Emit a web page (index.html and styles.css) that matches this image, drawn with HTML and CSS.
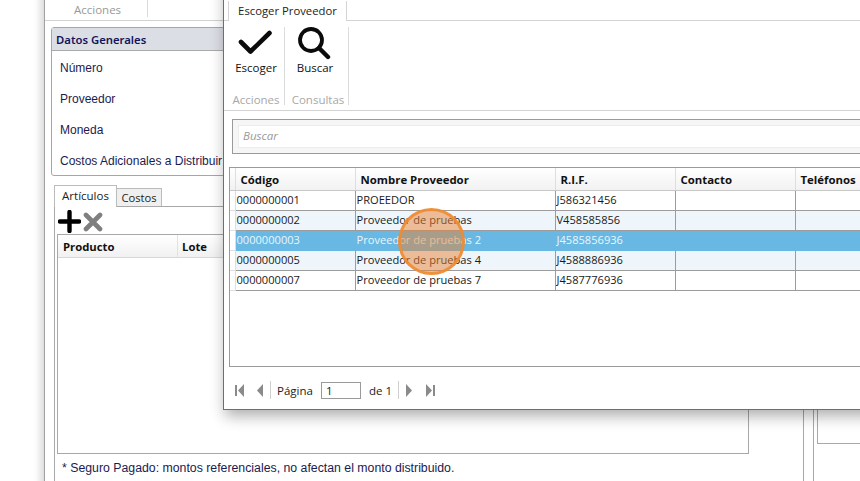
FILE: index.html
```html
<!DOCTYPE html>
<html lang="es">
<head>
<meta charset="utf-8">
<title>Escoger Proveedor</title>
<link rel="stylesheet" href="styles.css">
</head>
<body>
<div class="desktop">
  <section class="window back">
    <div class="back-ribbon"><span class="back-group">Acciones</span></div>
    <div class="panel">
      <div class="panel-head">Datos Generales</div>
      <div class="panel-body">
        <div class="field">Número</div>
        <div class="field">Proveedor</div>
        <div class="field">Moneda</div>
        <div class="field">Costos Adicionales a Distribuir</div>
      </div>
    </div>
    <div class="lower">
      <div class="left-col">
        <div class="tabs">
          <span class="tab active">Artículos</span>
          <span class="tab">Costos</span>
        </div>
        <div class="tab-body">
          <div class="mini-tools">
            <svg class="ic-plus" width="23" height="23" viewBox="0 0 23 23"><path d="M11.500 2v19M2 11.500h19" stroke="#000" stroke-width="4.400" stroke-linecap="round" fill="none"/></svg>
            <svg class="ic-x" width="20" height="20" viewBox="0 0 20 20"><path d="M3 3l14 14M17 3L3 17" stroke="#7f7f7f" stroke-width="4.600" stroke-linecap="round" fill="none"/></svg>
          </div>
          <div class="items">
            <div class="items-head"><span class="col-prod">Producto</span><span class="col-lote">Lote</span></div>
          </div>
          <p class="note">* Seguro Pagado: montos referenciales, no afectan el monto distribuido.</p>
        </div>
      </div>
      <div class="right-col"><div class="right-box"></div></div>
    </div>
  </section>

  <section class="window dialog">
    <div class="dlg-tabs"><span class="dlg-tab">Escoger Proveedor</span></div>
    <div class="dlg-ribbon">
      <div class="group g-acc">
        <div class="tool">
          <svg width="36" height="33" viewBox="0 0 36 33"><path d="M3 15l9.500 9.500L31.500 6" stroke="#0b0b0b" stroke-width="4.600" stroke-linecap="round" stroke-linejoin="round" fill="none"/></svg>
          <span>Escoger</span>
        </div>
        <div class="group-name">Acciones</div>
      </div>
      <div class="group g-con">
        <div class="tool">
          <svg width="36" height="33" viewBox="0 0 36 33"><circle cx="14" cy="13" r="11" stroke="#0b0b0b" stroke-width="3.800" fill="none"/><path d="M22 21l9 9" stroke="#0b0b0b" stroke-width="4.400" stroke-linecap="round" fill="none"/></svg>
          <span>Buscar</span>
        </div>
        <div class="group-name">Consultas</div>
      </div>
    </div>
    <div class="search-outer"><div class="search-inner">Buscar</div></div>
    <div class="grid-box">
      <table class="grid">
        <colgroup><col class="c0"><col class="c1"><col class="c2"><col class="c3"><col class="c4"><col class="c5"></colgroup>
        <thead>
          <tr><th></th><th>Código</th><th>Nombre Proveedor</th><th>R.I.F.</th><th>Contacto</th><th>Teléfonos</th></tr>
        </thead>
        <tbody>
          <tr><td></td><td>0000000001</td><td>PROEEDOR</td><td>J586321456</td><td></td><td></td></tr>
          <tr class="alt"><td></td><td>0000000002</td><td>Proveedor de pruebas</td><td>V458585856</td><td></td><td></td></tr>
          <tr class="sel"><td></td><td>0000000003</td><td>Proveedor de pruebas 2</td><td>J4585856936</td><td></td><td></td></tr>
          <tr class="alt"><td></td><td>0000000005</td><td>Proveedor de pruebas 4</td><td>J4588886936</td><td></td><td></td></tr>
          <tr><td></td><td>0000000007</td><td>Proveedor de pruebas 7</td><td>J4587776936</td><td></td><td></td></tr>
        </tbody>
      </table>
    </div>
    <div class="pager">
      <svg class="p-first" width="9" height="13" viewBox="0 0 9 13"><path d="M0 1h2v11H0zM9 0v13L3 6.500z" fill="#8a8a8a"/></svg>
      <svg class="p-prev" width="6" height="13" viewBox="0 0 6 13"><path d="M6 0v13L0 6.500z" fill="#8a8a8a"/></svg>
      <span class="p-sep sep-a"></span>
      <span class="p-label">Página</span>
      <span class="p-input">1</span>
      <span class="p-of">de 1</span>
      <span class="p-sep"></span>
      <svg class="p-next" width="6" height="13" viewBox="0 0 6 13"><path d="M0 0v13l6-6.500z" fill="#8a8a8a"/></svg>
      <svg class="p-last" width="9" height="13" viewBox="0 0 9 13"><path d="M0 0v13l6-6.500zM7 1h2v11H7z" fill="#8a8a8a"/></svg>
    </div>
  </section>

  <div class="click-mark"></div>
</div>
</body>
</html>
```
FILE: styles.css
```css
* { box-sizing: border-box; }
html, body { margin: 0; height: 100%; background: #fff; overflow: hidden; }
body { font-family: "Open Sans", "Noto Sans", sans-serif; font-size: 12px; color: #111; }
.desktop { position: relative; width: 860px; height: 481px; overflow: hidden; background: #fff; }

.window { position: absolute; background: #fff; }
.back { left: 44px; top: -40px; width: 830px; height: 560px; border-left: 1px solid #a0a0a0; box-shadow: -4px 0 7px rgba(0,0,0,.14); display: flex; flex-direction: column; padding-top: 40px; }
.back-ribbon { height: 21px; border-bottom: 1px solid #d2d2d2; flex: none; display: flex; }
.back-group { width: 103px; padding-left: 29px; font-size: 11.500px; line-height: 19px; color: #999; border-right: 1px solid #dcdcdc; margin-bottom: 3px; }

.panel { margin: 6px 0 0 6px; width: 760px; height: 149px; border: 1px solid #a6a6a6; border-radius: 3px; flex: none; }
.panel-head { height: 23px; background: #dcdee6; border-bottom: 1px solid #aaa; padding-left: 4px; line-height: 24px; font-family: "Noto Sans", sans-serif; font-weight: 600; font-size: 11.300px; color: #14145a; }
.panel-body { padding: 2px 0 0 8px; }
.field { height: 31px; line-height: 31px; font-family: "Liberation Sans", sans-serif; font-size: 12px; color: #1b1b50; }

.lower { flex: 1; display: flex; margin-top: 9px; align-items: stretch; }
.left-col { width: 750px; margin-left: 9px; flex: none; display: flex; flex-direction: column; }
.tabs { height: 22px; display: flex; align-items: flex-end; flex: none; border-bottom: 1px solid #a8a8a8; }
.tab { height: 18px; width: 46px; margin-left: -1px; background: #efefef; border: 1px solid #bbb; border-bottom: none; text-align: center; font-size: 11.200px; line-height: 17px; color: #222; }
.tab.active { width: 63px; height: 22px; margin-left: 0; margin-bottom: -1px; background: #fff; line-height: 20px; font-size: 11.500px; }
.tab-body { flex: 1; border: 1px solid #a8a8a8; border-top: none; padding: 2px 2px 0 2px; }
.mini-tools { display: flex; align-items: center; height: 25px; gap: 2px; padding-left: 1px; }
.items { width: 692px; height: 220px; border: 1px solid #a8a8a8; }
.items-head { height: 23px; display: flex; background: linear-gradient(#fff, #f1f1f1); border-bottom: 1px solid #d8d8d8; font-weight: 700; font-size: 11.300px; line-height: 23px; color: #111; }
.col-prod { width: 120px; padding-left: 5px; border-right: 1px solid #e2e2e2; }
.col-lote { padding-left: 4px; }
.note { margin: 7px 0 0 5px; font-family: "Liberation Sans", sans-serif; font-size: 12.300px; line-height: 14px; color: #1b1b50; white-space: nowrap; }
.right-col { width: 53px; border-left: 1px solid #a8a8a8; margin-left: 9px; padding-left: 3px; }
.right-box { height: 259px; border: 1px solid #a8a8a8; border-right: none; border-top: none; }

.dialog { left: 223px; top: -30px; width: 680px; height: 440px; border: 1px solid #6e6e6e; box-shadow: 2px 6px 14px rgba(0,0,0,.32); padding-top: 30px; }
.dlg-tabs { height: 20px; border-bottom: 1px solid #d4d4d4; padding-left: 4px; display: flex; }
.dlg-tab { width: 119px; height: 20px; border: 1px solid #d4d4d4; border-top: none; border-bottom: none; background: #fff; text-align: center; font-size: 11.300px; line-height: 20px; color: #222; }
.dlg-ribbon { height: 90px; border-bottom: 1px solid #d4d4d4; display: flex; padding: 6px 0 0 4px; }
.group { height: 78px; display: flex; flex-direction: column; align-items: center; border-right: 1px solid #dcdcdc; }
.g-acc { width: 57px; }
.g-con { width: 64px; }
.g-con .tool { margin-left: -3px; }
.g-con .group-name { margin-left: 3px; }
.tool { height: 64px; flex: none; display: flex; flex-direction: column; align-items: center; font-size: 11.500px; color: #111; }
.tool svg { flex: none; }
.tool span { margin-top: 0; line-height: 16px; }
.group-name { font-size: 11.500px; line-height: 18px; color: #a8a8a8; flex: none; }

.search-outer { margin: 8px 0 0 8px; height: 35px; border: 1px solid #9a9a9a; padding: 5px; background: #f6f6f6; }
.search-inner { height: 23px; background: #fff; border: 1px solid #ececec; font-size: 11.500px; font-style: italic; line-height: 20px; padding-left: 4px; color: #999; }

.grid-box { margin: 13px 0 0 5px; height: 200px; border: 1px solid #9a9a9a; border-right: none; }
.grid { border-collapse: collapse; table-layout: fixed; width: 639px; }
.c0 { width: 5px; } .c1 { width: 120px; } .c2 { width: 200px; } .c3 { width: 120px; } .c4 { width: 120px; } .c5 { width: 74px; }
.grid th { height: 22px; padding: 1px 0 0 5px; text-align: left; font-size: 11.400px; font-weight: 700; color: #111; background: linear-gradient(#fff, #f1f1f1); border-right: 1px solid #dedede; border-bottom: 1px solid #c8c8c8; white-space: nowrap; }
.grid td { height: 20px; padding: 0 0 0 1px; font-size: 11.100px; line-height: 18px; color: #1a1a1a; border-right: 1px solid #9c9c9c; border-bottom: 1px solid #9c9c9c; white-space: nowrap; overflow: hidden; }
.grid td:first-child { border-color: #dedede; padding: 0; background: #fff; }
.alt td { background: #eef6fc; }
.sel td { background: #69b8e3; color: #e8f6fd; border-color: #69b8e3; }

.pager { display: flex; align-items: center; height: 18px; margin: 14px 0 0 11px; font-size: 11.500px; color: #222; }
.p-first { flex: none; margin-right: 13px; }
.p-prev { flex: none; }
.p-sep { width: 1px; height: 18px; background: #cfcfcf; margin: 0 7px; flex: none; }
.sep-a { margin-right: 6px; }
.p-label { width: 44px; }
.p-input { width: 40px; height: 17px; border: 1px solid #9a9a9a; padding-left: 4px; line-height: 15px; }
.p-of { margin-left: 8px; width: 22px; white-space: nowrap; }
.p-next { flex: none; margin-right: 14px; }
.p-last { flex: none; }

.click-mark { position: absolute; left: 398px; top: 208px; width: 67px; height: 67px; border-radius: 50%; background: rgba(232,130,50,.5); border: 3px solid rgba(240,140,50,.9); }
```
